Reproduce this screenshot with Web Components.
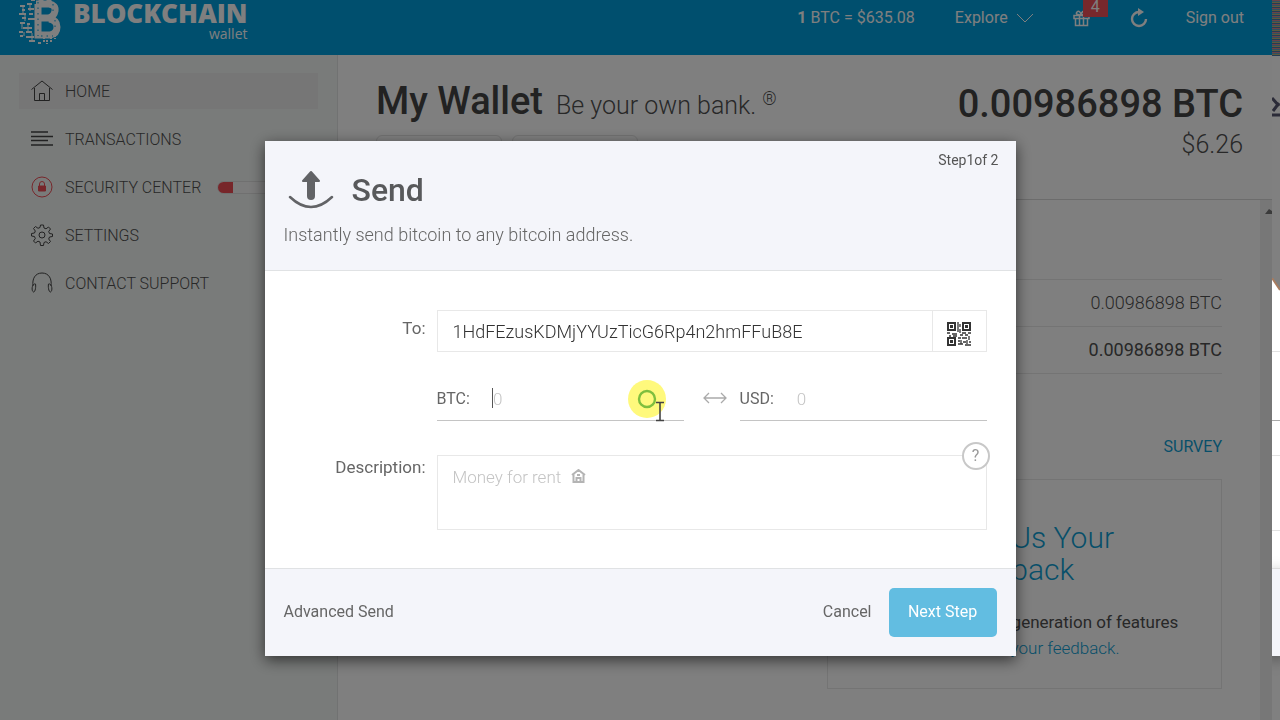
<!DOCTYPE html>
<html lang="en">
<head>
<meta charset="utf-8">
<title>My Wallet</title>
<style>
html,body{height:100%}
body{margin:0;overflow:hidden;background:#fff;color:#505050;font-family:Roboto,"Liberation Sans",sans-serif;font-size:16px}
</style>
</head>
<body>
<wallet-app></wallet-app>
<script>
const define=(name,css,html)=>customElements.define(name,class extends HTMLElement{
  constructor(){
    super();
    const t=document.createElement('template');
    t.innerHTML=`<style>*{box-sizing:border-box}a{color:inherit;text-decoration:none}${css}</style>${html}`;
    this.attachShadow({mode:'open'}).append(t.content.cloneNode(true));
  }
});

define('brand-logo',`
:host{display:flex;gap:12px}
svg{display:block}
.name{display:flex;flex-direction:column;align-items:flex-end;font-family:"Open Sans",sans-serif}
b{font-size:26px;line-height:26px;font-weight:800}
span{font-size:14px;line-height:16px}
`,`
<svg width="42" height="45" viewBox="0 0 42 45" fill="none" stroke="#fff" aria-hidden="true">
<path d="M22 0v5M30 0v5" stroke-width="5"/>
<path d="M17 4h13q7 1 6 7t-7 7H20M19 4v31h12q7-1 7-8t-8-8" stroke-width="7"/>
<path d="M25 37v6M32 37v5M36 35v4M28 40v4" stroke-width="2" stroke-dasharray="2 1"/>
<path d="M19 2v34M34 4v8M36 20v10M22 36h12" stroke="#009edc" stroke-width="1" stroke-dasharray="1.500 4"/>
<path d="M1 6h5M8 4h5M3 10h3M9 9h6M0 14h7M10 14h4M3 18h4M9 19h7M1 23h5M8 24h3M4 28h9M0 32h4M7 32h6M1 36h3M7 37h8M10 41h6M19 43h3M12 0h4" stroke-width="2"/>
<path d="M4 7v6M11 5v6M6 14v7M3 24v5M9 24v7M5 32v4M13 33v9" stroke-width="1"/>
</svg>
<div class="name"><b>BLOCKCHAIN</b><span>wallet</span></div>`);

define('top-bar',`
:host{display:flex;justify-content:space-between;height:55px;padding:0 28px 0 19px;background:#009edc;color:#fff}
nav{display:flex;align-items:center;height:35px}
a{white-space:nowrap}
.rate{margin-right:40px}
.explore{display:flex;align-items:center;gap:9px;margin-right:40px}
.gift{position:relative;margin-right:40px}
.badge{position:absolute;left:10px;top:-9px;width:25px;height:17px;background:#ee5058;text-align:center;line-height:13px}
.refresh{margin-right:38px}
svg{display:block}
`,`
<brand-logo></brand-logo>
<nav>
<a class="rate" href="#"><b>1</b> BTC = <span>$635.08</span></a>
<a class="explore" href="#">Explore<svg width="16" height="10" viewBox="0 0 16 10" fill="none" stroke="#fff"><path d="M0 1l8 8 8-8"/></svg></a>
<a class="gift" href="#" aria-label="News"><svg width="17" height="18" viewBox="0 0 17 18" fill="none" stroke="#fff"><path d="M1 6.500h15v3H1zM2.500 9.500v7h12v-7M6.500 7v9M10.500 7v9M8 6C5 6 2 5 4 3s4 1 4 3c1-3 2-5 4-3s-1 3-4 3" stroke-width="1.500"/></svg><span class="badge">4</span></a>
<a class="refresh" href="#" aria-label="Refresh"><svg width="18" height="20" viewBox="0 0 18 20"><path d="M9 4a7 7 0 1 0 7 7" fill="none" stroke="#fff" stroke-width="2.400"/><path d="M8 0v8l6-4z" fill="#fff"/></svg></a>
<a href="#">Sign out</a>
</nav>`);

define('nav-item',`
:host{display:block}
a{display:flex;align-items:center;gap:12px;height:36px;padding:0 12px;white-space:nowrap;font-weight:300}
:host([active]) a{background:#ececec}
slot[name=icon]{display:block}
::slotted(svg){display:block;flex:none;width:22px;height:22px}
`,`<a href="#"><slot name="icon"></slot><slot></slot><slot name="extra"></slot></a>`);

define('security-meter',`
:host{display:block;width:84px;height:13px;margin-left:4px;border:1px solid #e0e0e0;border-radius:7px;background:#f6f6f6;overflow:hidden}
i{display:block;width:15px;height:12px;background:#ef4d55}
`,`<i></i>`);

define('side-menu',`
:host{display:block;width:338px;flex:none;padding:18px 19px;background:#f3f7f5;border-right:1px solid #e2e4e4}
nav{display:flex;flex-direction:column;gap:12px}
svg{fill:none;stroke:#444}
`,`
<nav>
<nav-item active><svg slot="icon" viewBox="0 0 22 22"><path d="M.5 9.500L11 1l10.500 8.500M3.500 8v12.500h15V8M8.500 20.500v-7h5v7"/></svg>HOME</nav-item>
<nav-item><svg slot="icon" viewBox="0 0 22 22"><path d="M0 4h17M0 12.500h17M0 8.500h22M0 17h22" stroke-width="1.500"/></svg>TRANSACTIONS</nav-item>
<nav-item><svg slot="icon" viewBox="0 0 22 22" style="stroke:#ef4d55"><circle cx="11" cy="11" r="10"/><path d="M8.500 10V8a2.500 2.500 0 0 1 5 0v2"/><path d="M7.500 10h7v5h-7z" fill="#ef4d55"/></svg>SECURITY CENTER<security-meter slot="extra"></security-meter></nav-item>
<nav-item><svg slot="icon" viewBox="0 0 22 22"><circle cx="11" cy="11" r="3"/><path d="M9.500 1h3l.5 3 2 .8 2.500-1.800 2 2-1.800 2.500.8 2 3 .5v2.500l-3 .5-.8 2 1.800 2.500-2 2-2.500-1.800-2 .8-.5 3h-3L9 18l-2-.8L4.500 19l-2-2 1.800-2.500-.8-2-3-.5V9.500l3-.5.8-2L2.500 4.500l2-2L7 4.300 9 3.500z"/></svg>SETTINGS</nav-item>
<nav-item><svg slot="icon" viewBox="0 0 22 22"><path d="M2 14C1 7 4 1 11 1s10 6 9 13"/><path d="M4.500 12C1 11 0 19 2.500 20c2 0 2.500-6 2-8zM17.500 12c3.500-1 4.500 7 2 8-2 0-2.500-6-2-8z"/></svg>CONTACT SUPPORT</nav-item>
</nav>`);

define('wallet-heading',`
:host{display:flex;justify-content:space-between;height:145px;padding:23px 29px 0 38px;border-bottom:1px solid #d8d8d8}
.title{display:flex;align-items:baseline;gap:13px;height:46px;white-space:nowrap}
h1{margin:0;font-size:38px;font-weight:500;line-height:46px;color:#444}
p{margin:0;font-size:25px;line-height:30px;font-weight:300}
sup{font-size:18px;line-height:0;margin-left:6px}
.tabs{display:flex;gap:10px;margin-top:11px}
button{width:126px;height:38px;border:1px solid #e4e4e4;border-radius:6px;background:#fff;font:inherit}
.balance{text-align:right;white-space:nowrap}
.balance strong{display:block;font-size:38px;line-height:52px;font-weight:500;color:#444}
.balance span{display:block;font-size:25px;line-height:30px;font-weight:300}
`,`
<div><div class="title"><h1>My Wallet</h1><p>Be your own bank.<sup>®</sup></p></div>
<div class="tabs"><button aria-label="Send"></button><button aria-label="Request"></button></div></div>
<div class="balance"><strong>0.00986898 BTC</strong><span>$6.26</span></div>`);

define('feedback-card',`
:host{display:block;width:395px;height:210px;padding:42px 0 0 119px;border:1px solid #e8e8e8;color:#505050}
h2{margin:0 0 23px;font-size:30px;line-height:32px;font-weight:300;color:#109fd4;white-space:nowrap}
p{margin:0 0 0 28px;font-size:17px;line-height:26px;white-space:nowrap}
a{color:#109fd4;font-weight:300}
`,`<h2>Give Us Your<br>Feedback</h2><p>next generation of features<br><a href="#">with your feedback.</a></p>`);

define('balance-panel',`
:host{display:flex;flex:1}
.body{flex:1;display:flex;flex-direction:column;align-items:flex-end;padding:79px 38px 0 37px}
table{width:395px;border-collapse:collapse;font-size:18px;border-bottom:1px solid #e8e8e8}
td{height:47px;padding:0 0 2px;text-align:right;border-top:1px solid #e8e8e8;font-weight:300}
tr+tr td{font-weight:400}
.survey{margin:61px 0 20px;line-height:24px;color:#109fd4}
.scroll{width:12px;background:#efefef}
.scroll svg{display:block;margin:8px 0 0 4px}
`,`
<div class="body"><table><tr><td>0.00986898 BTC</td></tr><tr><td>0.00986898 BTC</td></tr></table>
<a class="survey" href="#">SURVEY</a><feedback-card></feedback-card></div>
<div class="scroll"><svg width="8" height="7" viewBox="0 0 8 7" fill="#777"><path d="M1 6l4-5 3 2v3z"/></svg></div>`);

define('send-form',`
:host{display:grid;grid-template-columns:142px 1fr;column-gap:11px;padding:39px 29px 38px 19px}
label{line-height:24px}
.key{text-align:right;font-size:17px}
.key[for=to]{padding-top:6px}
input,textarea{font:inherit;color:#555;border:0;outline:0;background:none;padding:0;margin:0;min-width:0}
.address{display:flex;height:42px;border:1px solid #e8e8e8;margin-bottom:26px}
.address input{flex:1;font-size:18px;font-weight:300;color:#333;padding-left:15px}
button{border:0;border-left:1px solid #e8e8e8;background:none;width:54px;padding:5px 0 0;cursor:pointer}
button svg{display:block;margin:auto}
.amounts{grid-column:2;display:flex;align-items:center;margin-bottom:34px}
.field{position:relative;flex:1;display:flex;align-items:center;height:43px;border-bottom:1px solid #c4c4c4;min-width:0}
.field input{flex:1;margin-left:23px;width:10px;font-size:17px}
.caret{position:absolute;left:55px;top:10px;width:1px;height:20px;background:#555}
.swap{flex:none;width:56px}
.swap svg{display:block;margin:0 auto 4px 19px}
::placeholder{color:#c4c4c4;opacity:1;font-weight:300}
.note{position:relative;height:75px}
textarea{display:block;width:100%;height:75px;border:1px solid #e8e8e8;padding:9px 15px;resize:none;font-size:17px;line-height:24px}
.house{position:absolute;left:134px;top:14px}
.help{position:absolute;right:-3px;top:-13px;width:28px;height:28px;border:2px solid #c8c8c8;border-radius:50%;background:#fff;color:#999;text-align:center;line-height:24px}
.pointer{position:absolute;left:190px;top:0}
`,`
<label class="key" for="to">To:</label>
<div class="address"><input id="to" value="1HdFEzusKDMjYYUzTicG6Rp4n2hmFFuB8E"><button type="button" aria-label="Scan QR code">
<svg width="24" height="24" viewBox="0 0 24 24" fill="none" stroke="#333"><path d="M1 1h7v7H1zM16 1h7v7h-7zM1 16h7v7H1z" stroke-width="2"/><path d="M3 3h3v3H3zM18 3h3v3h-3zM3 18h3v3H3z" fill="#333" stroke="none"/><path d="M11 0v10M13 2v3M13 7v4M0 11h3M5 12h5M2 14h2M6 14h4M15 11h4M21 11h3M13 13h3M18 13h3M11 16h3M15 16h5M22 14v4M11 19h2M14 18v4M16 20h3M20 18v4M11 22h5M18 23h6M22 20h2" stroke-width="1.300"/></svg></button></div>
<div class="amounts">
<div class="field"><label for="btc">BTC:</label><input id="btc" placeholder="0"><i class="caret"></i>
<svg class="pointer" width="42" height="46" viewBox="0 0 42 46" fill="none"><circle cx="20" cy="21" r="19" fill="#fff97c"/><circle cx="20" cy="21" r="8" stroke="#7fbf3e" stroke-width="2.400"/><path d="M29 24.500h8M33 24.500v18M29 42.500h8" stroke="#444" stroke-width="1.600"/></svg></div>
<div class="swap"><svg width="24" height="12" viewBox="0 0 24 12" fill="none" stroke="#aaa" stroke-width="1.300"><path d="M1 6h22M6 1L1 6l5 5M18 1l5 5-5 5"/></svg></div>
<div class="field"><label for="usd">USD:</label><input id="usd" placeholder="0"></div>
</div>
<label class="key" for="note">Description:</label>
<div class="note"><textarea id="note" placeholder="Money for rent"></textarea>
<svg class="house" width="15" height="14" viewBox="0 0 15 14" fill="none" stroke="#b4b4b4" stroke-width="2"><path d="M1 6l6.500-5L14 6M2.500 5v8h10V5M5.500 13V9h4v4M6 6h3"/></svg>
<a class="help" href="#" aria-label="Help">?</a></div>`);

define('send-dialog',`
:host{display:block;width:751px;background:#fff;color:#666;box-shadow:0 4px 14px rgba(0,0,0,.6)}
header{position:relative;height:130px;padding:24px 19px 0;background:#f4f5fa;border-bottom:1px solid #e0e2e4}
.title{display:flex;align-items:center;gap:18px;margin-left:4px}
h2{margin:0;font-size:32px;line-height:50px;font-weight:500;color:#58595b}
p{margin:8px 0 0;font-size:18px;line-height:24px;font-weight:300}
.step{position:absolute;right:17px;top:9px;font-size:14px;line-height:20px;color:#555}
footer{display:flex;align-items:center;height:88px;padding:0 19px;background:#f4f5fa;border-top:1px solid #e0e2e4}
button{border:0;background:none;padding:0 0 2px;font:inherit;color:inherit;cursor:pointer}
.cancel{margin:0 17px 0 auto}
.next{width:108px;height:49px;border-radius:5px;background:#62bde1;color:#fff}
`,`
<header><div class="title"><svg width="46" height="40" viewBox="0 0 46 40" fill="none" stroke="#626366" stroke-linecap="round" stroke-linejoin="round"><path d="M23 10v16" stroke-width="8"/><path d="M23 2l-8 9h16z" fill="#626366" stroke-width="2"/><path d="M2 27q21 20 42 0" stroke-width="2.500"/></svg><h2>Send</h2></div>
<p>Instantly send bitcoin to any bitcoin address.</p><span class="step">Step1of 2</span></header>
<send-form></send-form>
<footer><button>Advanced Send</button><button class="cancel">Cancel</button><button class="next">Next Step</button></footer>`);

define('screen-edge',`
:host{position:relative;z-index:3;display:flex;flex-direction:column;flex:none;width:8px;background:#808080;overflow:hidden}
.stripes{height:56px;flex:none;background:repeating-linear-gradient(#6b4148 0 1px,#31505f 1px 2px,#5c5a3c 2px 3px,#243c55 3px 4px)}
.grey{height:222px;flex:none}
.grey svg{display:block;margin-top:38px}
.page{height:290px;flex:none;background:#fff}
.page svg{display:block}
.foot{height:88px;flex:none;background:#f4f5fa;border-top:1px solid #ddd;box-shadow:0 4px 14px rgba(0,0,0,.6)}
`,`
<div class="stripes"></div>
<div class="grey"><svg width="8" height="26" viewBox="0 0 8 26" fill="none" stroke="#2b2b38" stroke-width="3"><path d="M0 4l7 8M7 9L1 17M0 21h8"/></svg></div>
<div class="page"><svg width="8" height="290" viewBox="0 0 8 290" fill="none" stroke="#e2e2e2"><path d="M0 0h8v12z" fill="#808080" stroke="none"/><path d="M0 0l8 12" stroke="#a87b5e" stroke-width="2"/><path d="M0 73.500h8M0 177.500h8M0 252.500h8"/><path d="M0 142.500h8" stroke="#aaa"/></svg></div>
<div class="foot"></div>`);

define('wallet-app',`
:host{display:flex;min-height:100%;height:100%;overflow:hidden}
.app{flex:1;min-width:0;display:flex;flex-direction:column}
.columns{flex:1;display:flex;min-height:0}
main{flex:1;min-width:0;display:flex;flex-direction:column}
.overlay{position:fixed;inset:0;z-index:2;display:flex;justify-content:center;align-items:flex-start;padding-top:141px;background:rgba(0,0,0,.5)}
`,`
<div class="app"><top-bar></top-bar>
<div class="columns"><side-menu></side-menu><main><wallet-heading></wallet-heading><balance-panel></balance-panel></main></div></div>
<screen-edge></screen-edge>
<div class="overlay" role="dialog" aria-label="Send"><send-dialog></send-dialog></div>`);
</script>
</body>
</html>
